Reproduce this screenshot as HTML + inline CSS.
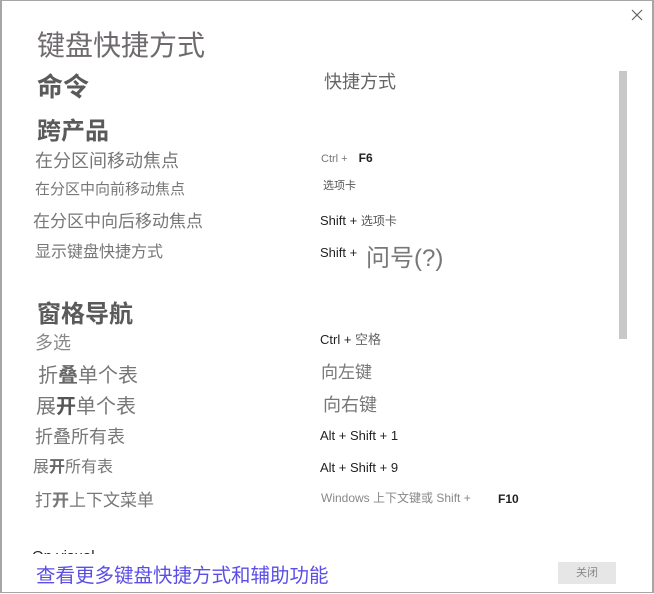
<!DOCTYPE html>
<html><head><meta charset="utf-8"><style>
html,body{margin:0;padding:0}
body{width:654px;height:594px;position:relative;overflow:hidden;background:#fff;font-family:"Liberation Sans","Noto Sans CJK SC",sans-serif;color:#777}
.frame{position:absolute;left:0;top:0;width:650px;height:590px;border:2px solid #a6a6a6;border-top-width:1px;}
.t{position:absolute;white-space:nowrap;line-height:1}
.k{color:#222}
.b{font-weight:bold}
</style></head><body>
<div class="frame"></div>
<svg style="position:absolute;left:631px;top:9px" width="12" height="12"><path d="M1 1L11 11M11 1L1 11" stroke="#666" stroke-width="1.2"/></svg>
<div style="position:absolute;left:619px;top:71px;width:8px;height:268px;background:#c8c8c8"></div>
<div style="position:absolute;left:2px;top:540px;width:615px;height:14px;overflow:hidden"><div class="t k" style="left:30px;top:9px;font-size:15px">On visual</div></div>
<div style="position:absolute;left:2px;top:554px;width:650px;height:38px;background:#fff"></div>

<div class="t" style="left:37px;top:32px;font-size:28px;color:#6e6a6e">键盘快捷方式</div>
<div class="t" style="left:37px;top:74px;font-size:26px;color:#5a5a5a;font-weight:bold">命令</div>
<div class="t" style="left:324px;top:73px;font-size:18px;color:#666">快捷方式</div>
<div class="t" style="left:37px;top:120px;font-size:24px;color:#5a5a5a;font-weight:bold">跨产品</div>

<div class="t" style="left:35px;top:152px;font-size:18px">在分区间移动焦点</div>
<div class="t" style="left:321px;top:152px;font-size:11px">Ctrl + <span class="k b" style="font-size:12px;margin-left:8px">F6</span></div>
<div class="t" style="left:35px;top:182px;font-size:15px">在分区中向前移动焦点</div>
<div class="t" style="left:323px;top:181px;font-size:11px;color:#555">选项卡</div>
<div class="t" style="left:33px;top:213px;font-size:17px">在分区中向后移动焦点</div>
<div class="t" style="left:320px;top:214px;font-size:13px"><span class="k">Shift +</span> <span style="font-size:12px;color:#555">选项卡</span></div>
<div class="t" style="left:35px;top:245px;font-size:16px">显示键盘快捷方式</div>
<div class="t k" style="left:320px;top:246px;font-size:13px">Shift +</div>
<div class="t" style="left:366px;top:247px;font-size:24px;color:#777">问号(?)</div>

<div class="t" style="left:37px;top:303px;font-size:24px;color:#5a5a5a;font-weight:bold">窗格导航</div>
<div class="t" style="left:35px;top:334px;font-size:18px;color:#888">多选</div>
<div class="t" style="left:320px;top:333px;font-size:13px"><span class="k">Ctrl +</span> <span style="color:#666">空格</span></div>
<div class="t" style="left:38px;top:366px;font-size:20px">折<b style="color:#666">叠</b>单个表</div>
<div class="t" style="left:321px;top:364px;font-size:17px">向左键</div>
<div class="t" style="left:36px;top:397px;font-size:20px">展<b style="color:#555">开</b>单个表</div>
<div class="t" style="left:323px;top:396px;font-size:18px">向右键</div>
<div class="t" style="left:35px;top:428px;font-size:18px">折叠所有表</div>
<div class="t k" style="left:320px;top:429px;font-size:13px">Alt + Shift + 1</div>
<div class="t" style="left:33px;top:460px;font-size:16px">展<b style="color:#666">开</b>所有表</div>
<div class="t k" style="left:320px;top:461px;font-size:13px">Alt + Shift + 9</div>
<div class="t" style="left:35px;top:492px;font-size:17px">打<b style="color:#777">开</b>上下文菜单</div>
<div class="t" style="left:321px;top:492px;font-size:12px;color:#888">Windows 上下文键或 Shift +</div>
<div class="t k b" style="left:498px;top:493px;font-size:12px">F10</div>

<div class="t" style="left:36px;top:567px;font-size:19.5px;color:#5b4ee6">查看更多键盘快捷方式和辅助功能</div>
<div style="position:absolute;left:558px;top:562px;width:58px;height:22px;background:#e6e6e6;font-size:11px;color:#888;text-align:center;line-height:22px">关闭</div>
</body></html>
